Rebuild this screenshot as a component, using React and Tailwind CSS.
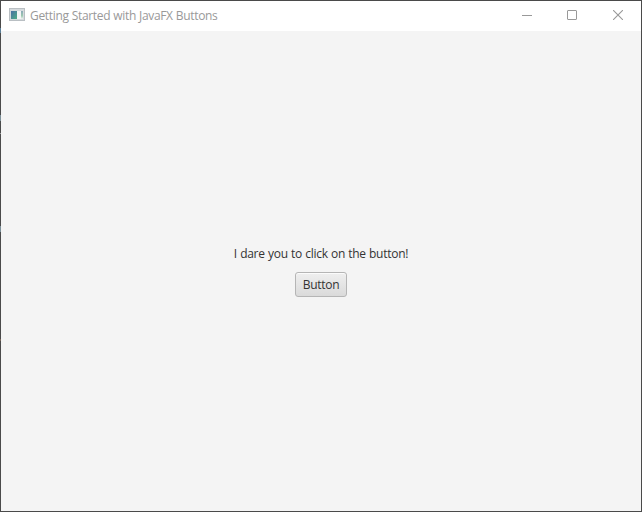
function AppIcon() {
  return (
    <svg className="-mt-[3px]" width="16" height="13" viewBox="0 0 16 13" shapeRendering="crispEdges">
      <defs>
        <linearGradient id="pane" x1="0" y1="0" x2="1" y2="1">
          <stop offset="0" stopColor="#4a6fa5" />
          <stop offset="1" stopColor="#4fae86" />
        </linearGradient>
        <linearGradient id="strip" x1="0" y1="0" x2="0" y2="1">
          <stop offset="0" stopColor="#8aa9b8" />
          <stop offset="0.6" stopColor="#9cc9b0" />
          <stop offset="1" stopColor="#f2f3f3" />
        </linearGradient>
      </defs>
      <rect width="16" height="13" fill="#b9bfc3" />
      <rect x="1" y="1" width="14" height="11" fill="#d5dadd" />
      <rect x="2" y="3" width="6" height="8" fill="url(#pane)" />
      <rect x="8" y="3" width="4" height="8" fill="#f4f5f6" />
      <rect x="12" y="3" width="2" height="8" fill="url(#strip)" />
    </svg>
  );
}

function TitleBar() {
  return (
    <header className="flex h-[30px] shrink-0 items-center bg-white pl-2 text-[#999999]">
      <AppIcon />
      <h1 className="ml-[5px] whitespace-nowrap text-[12px] leading-[16px] tracking-[-0.33px] [word-spacing:0.3px]">
        Getting Started with JavaFX Buttons
      </h1>
      <div className="ml-auto flex pb-[2px]">
        <button className="flex h-[28px] w-[45px] items-center justify-center" aria-label="Minimize">
          <svg width="10" height="10" viewBox="0 0 10 10" shapeRendering="crispEdges">
            <path d="M0 5.5H10" stroke="currentColor" />
          </svg>
        </button>
        <button className="flex h-[28px] w-[46px] items-center justify-center" aria-label="Maximize">
          <svg width="10" height="10" viewBox="0 0 10 10" fill="none">
            <rect x=".5" y=".5" width="9" height="9" rx=".5" stroke="currentColor" />
          </svg>
        </button>
        <button className="flex h-[28px] w-[46px] items-center justify-center" aria-label="Close">
          <svg width="10" height="10" viewBox="0 0 10 10">
            <path d="M0 0L10 10M10 0L0 10" stroke="currentColor" strokeWidth="1.1" />
          </svg>
        </button>
      </div>
    </header>
  );
}

function EdgeFlecks() {
  return (
    <div className="absolute -left-px top-0 w-px">
      <div className="mt-[27px] h-[5px] bg-[#5b7f99]" />
      <div className="mt-[82px] h-[6px] bg-[#7b8f98]" />
      <div className="mt-[12px] h-px bg-[#9a9a9a]" />
      <div className="mt-[92px] h-[6px] bg-[#7b8f98]" />
      <div className="mt-[107px] h-[2px] bg-[#77655a]" />
    </div>
  );
}

export default function App() {
  return (
    <div className="relative flex h-[512px] w-[642px] flex-col border border-[#4a4a4a] bg-[#f4f4f4] font-['Open_Sans','Noto_Sans',sans-serif]">
      <TitleBar />
      <main className="flex flex-1 flex-col items-center pt-[215px] text-[12px] leading-[16px] text-[#333333]">
        <p className="whitespace-nowrap tracking-[-0.27px] [word-spacing:0.4px]">I dare you to click on the button!</p>
        <button className="mt-[10px] flex h-[25px] w-[52px] items-center justify-center rounded-[3px] border border-[#b5b5b5] bg-linear-to-b from-[#efefef] to-[#dadada] tracking-[-0.3px] shadow-[inset_0_1px_0_#fbfbfb]">
          Button
        </button>
      </main>
      <EdgeFlecks />
    </div>
  );
}
